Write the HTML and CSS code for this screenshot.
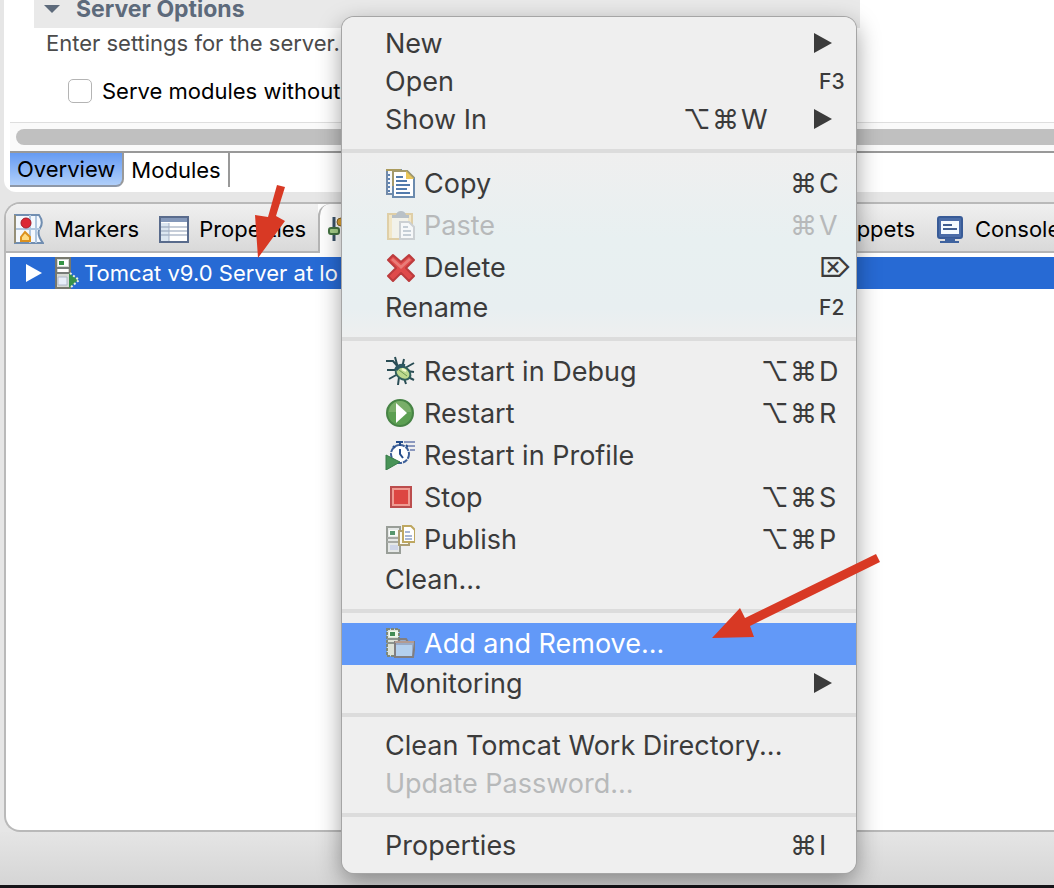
FILE: index.html
```
<!DOCTYPE html>
<html lang="en">
<head>
    <meta charset="UTF-8">
    <meta name="viewport" content="width=device-width, initial-scale=1.0">
    <title>Servers</title>
    <link rel="stylesheet" href="styles.css">
</head>
<body>
    <!-- Server editor -->
    <section class="editor">
        <div class="form">
            <h2 class="section-title">
                <svg class="twisty" viewBox="0 0 16 8"><path d="M0 0h16l-8 8z" fill="#5d6a7b"/></svg>
                Server Options
            </h2>
            <p class="hint">Enter settings for the server.</p>
            <div class="option">
                <input type="checkbox" id="serveModules">
                <label for="serveModules">Serve modules without</label>
            </div>
        </div>
        <div class="scrollbar"><div class="thumb"></div></div>
        <div class="pages">
            <button class="page active">Overview</button>
            <button class="page">Modules</button>
        </div>
    </section>

    <!-- Views -->
    <section class="views">
        <div class="tabs">
            <div class="tab-group">
                <button class="tab">
                    <svg class="tab-icon" viewBox="0 0 30 30">
                        <path d="M1 1h24q5 7 1 13t3 15H1z" fill="#f4f8fd" stroke="#718eb1" stroke-width="2"/>
                        <path d="M2 15h24M16 1v28M22 2v27" stroke="#b0c6df" stroke-width="2"/>
                        <path d="M1 1v28" stroke="#958f78" stroke-width="2"/>
                        <circle cx="12" cy="9" r="5" fill="#dc2733" stroke="#a51b29"/>
                        <path d="M7 27v-4l4-5 5 5v4z" fill="#ffdc83" stroke="#dc911f" stroke-width="2"/>
                    </svg>
                    Markers
                </button>
                <button class="tab">
                    <svg class="tab-icon" viewBox="0 0 30 30">
                        <path d="M1 3h28v25H1z" fill="#fff" stroke="#596b8c" stroke-width="2"/>
                        <path d="M2 4h26v4H2z" fill="#8397b9"/>
                        <path d="M2 9h8v18H2z" fill="#dbe6f1"/>
                        <path d="M2 13h26M2 17h26M2 21h26" stroke="#8d9cb3"/>
                        <path d="M10 9v18" stroke="#a3b1c6" stroke-width="1"/>
                    </svg>
                    Properties
                </button>
            </div>
            <button class="tab current" aria-label="Servers">
                <svg class="tab-icon" viewBox="0 0 30 30">
                    <path d="M6 3v24M15 1v25" stroke="#3b5269" stroke-width="3"/>
                    <rect x="1" y="14" width="10" height="6" rx="2" fill="#a8d18b" stroke="#447342" stroke-width="2"/>
                    <circle cx="13" cy="8" r="4" fill="#e3a531" stroke="#8b6824"/>
                </svg>
            </button>
            <div class="tab-group rest">
                <button class="tab">Snippets</button>
                <button class="tab">
                    <svg class="tab-icon" viewBox="0 0 30 30">
                        <rect x="3" y="3" width="24" height="21" rx="2" fill="#4b6da8" stroke="#385b97" stroke-width="2"/>
                        <path d="M6 7h18v13H6z" fill="#f4fbff"/>
                        <path d="M8 11h9M8 15h14" stroke="#405f91" stroke-width="2"/>
                        <path d="M10 24h10v3h4v2H5v-2h5z" fill="#3f639f"/>
                    </svg>
                    Console
                </button>
            </div>
        </div>
        <div class="server">
            <svg class="expand" viewBox="0 0 16 18"><path d="M0 0l16 9-16 9z" fill="#fff"/></svg>
            <svg class="server-icon" viewBox="0 0 26 32">
                <path d="M2 1h14v30H2z" fill="#d5d9d4" stroke="#77796f" stroke-width="2"/>
                <path d="M4 3h10v6H4z" fill="#fff"/>
                <path d="M5 4h5v4H5z" fill="#359446"/>
                <path d="M3 11h12M3 16h12" stroke="#777d79" stroke-width="2"/>
                <path d="M4 12h10v3H4z" fill="#fff"/>
                <path d="M4 20h9v8H4z" fill="#e7eef8" stroke="#aeb8ca"/>
                <path d="M15 16l9 7-9 8z" fill="#37924b"/>
                <path d="M16 16l9 7-9 8" fill="none" stroke="#e7f1df" stroke-width="2" stroke-dasharray="2 2"/>
            </svg>
            <span>Tomcat v9.0 Server at lo</span>
        </div>
    </section>
    <footer class="status"></footer>

    <!-- Context menu -->
    <div class="menu" role="menu">
        <button class="item">New <span class="submenu"></span></button>
        <button class="item">Open <span class="keys"><kbd class="small">F3</kbd></span></button>
        <button class="item">Show In <span class="keys"><span>⌥</span><span>⌘</span><kbd>W</kbd></span><span class="submenu"></span></button>
        <hr>
        <button class="item with-icon">
            <svg viewBox="0 0 30 30">
                <path d="M2 2h14v24H2z" fill="#f5f8fb" stroke="#728baa" stroke-width="2"/>
                <path d="M1 2h15" stroke="#ab9b5d" stroke-width="2"/>
                <path d="M4 6v18" stroke="#5c82b3" stroke-width="2" stroke-dasharray="2 2"/>
                <path d="M8 3h14l7 7v19H8z" fill="#fff" stroke="#6b8bae" stroke-width="2"/>
                <path d="M8 18V3h14l7 7" fill="none" stroke="#a49a6b" stroke-width="2"/>
                <path d="M21 3v8h8z" fill="#eac75b"/>
                <path d="M11 9h7M11 13h11M11 17h14M11 21h11M11 25h14" stroke="#527bad" stroke-width="2"/>
            </svg>
            Copy <span class="keys"><span>⌘</span><kbd>C</kbd></span>
        </button>
        <button class="item with-icon" disabled>
            <svg viewBox="0 0 30 30">
                <path d="M3 4h24v25H3z" fill="#f5e5bd" stroke="#ddc795" stroke-width="2"/>
                <path d="M7 7h16v21H7z" fill="#f5f3e9"/>
                <path d="M7 8V5h4q1-4 5-4t5 4h3v3z" fill="#aeb6bd"/>
                <path d="M15 12h9l5 5v12H15z" fill="#fafbfc" stroke="#c5c9cc" stroke-width="2"/>
                <path d="M18 17h5M18 21h8M18 25h8" stroke="#bdc6d0" stroke-width="2"/>
            </svg>
            Paste <span class="keys"><span>⌘</span><kbd>V</kbd></span>
        </button>
        <button class="item with-icon">
            <svg viewBox="0 0 30 30">
                <path d="M8 3l8 7 8-7 5 5-8 8 8 8-5 5-8-8-8 8-5-5 8-8-8-8z" fill="#df4b4b" stroke="#bc3c3e" stroke-width="2" stroke-linejoin="round"/>
                <path d="M7 7l9 8 9-8" fill="none" stroke="#e97c78" stroke-width="3"/>
            </svg>
            Delete <span class="keys"><kbd>⌦</kbd></span>
        </button>
        <button class="item">Rename <span class="keys"><kbd class="small">F2</kbd></span></button>
        <hr>
        <button class="item with-icon">
            <svg viewBox="0 0 30 30">
                <path d="M1 5h7l6 7M10 1l3 11M19 3l-2 9M29 7l-9 5M2 14h10M4 23l9-5M13 29l1-8M21 28l-2-6M29 16l-7-1M29 24l-6-3" fill="none" stroke="#294c54" stroke-width="2"/>
                <ellipse cx="18" cy="17" rx="8" ry="6" transform="rotate(35 18 17)" fill="#bcd88d" stroke="#315f5c" stroke-width="2"/>
                <path d="M11 14q2-5 9-4" fill="none" stroke="#2d5862" stroke-width="4"/>
                <path d="M14 14l8 6" stroke="#6e9654" stroke-width="1"/>
                <path d="M17 13l4 2" stroke="#f2f8cf" stroke-width="2"/>
            </svg>
            Restart in Debug <span class="keys"><span>⌥</span><span>⌘</span><kbd>D</kbd></span>
        </button>
        <button class="item with-icon">
            <svg viewBox="0 0 30 30">
                <circle cx="15" cy="15" r="13" fill="#5c9f52" stroke="#478345" stroke-width="2"/>
                <path d="M4 14a11 11 0 0 1 22 0z" fill="#79ae69"/>
                <path d="M11 5l11 10-11 10z" fill="#fff"/>
            </svg>
            Restart <span class="keys"><span>⌥</span><span>⌘</span><kbd>R</kbd></span>
        </button>
        <button class="item with-icon">
            <svg viewBox="0 0 30 30">
                <circle cx="15" cy="14" r="9" fill="#fff" stroke="#3d5f98" stroke-width="2" stroke-dasharray="5 1"/>
                <path d="M11 2h7M15 2v4M21 5l2 2M8 6l2 2M15 9v5l3 4" fill="none" stroke="#254d8b" stroke-width="2"/>
                <path d="M19 2h11M23 6h7M25 10h5" stroke="#8b98be" stroke-width="2"/>
                <path d="M1 15l14 7-14 8z" fill="#489356" stroke="#367a48"/>
            </svg>
            Restart in Profile
        </button>
        <button class="item with-icon">
            <svg viewBox="0 0 30 30">
                <rect x="6" y="5" width="20" height="20" fill="#df3d3b" stroke="#bb4d4d" stroke-width="2"/>
                <rect x="8" y="7" width="16" height="16" fill="#dd4642" stroke="#ef9b92" stroke-width="2"/>
            </svg>
            Stop <span class="keys"><span>⌥</span><span>⌘</span><kbd>S</kbd></span>
        </button>
        <button class="item with-icon">
            <svg viewBox="0 0 30 30">
                <path d="M2 3h13v26H2z" fill="#e5e8e7" stroke="#999e98" stroke-width="2"/>
                <path d="M4 6h9v6H4z" fill="#f9fcf8"/>
                <path d="M5 7h5v4H5z" fill="#57966e"/>
                <path d="M2 14h13M2 18h13" stroke="#a7aaa6" stroke-width="2"/>
                <path d="M5 21h8v5H5z" fill="#ced5e8"/>
                <path d="M14 7h10v14H14z" fill="#fafaf5" stroke="#ad9f74" stroke-width="2"/>
                <path d="M18 2h8l4 4v12H18z" fill="#fff" stroke="#bea760" stroke-width="2"/>
                <path d="M20 8h5M20 12h7M20 15h7" stroke="#a8b7d5" stroke-width="2"/>
            </svg>
            Publish <span class="keys"><span>⌥</span><span>⌘</span><kbd>P</kbd></span>
        </button>
        <button class="item">Clean...</button>
        <hr>
        <button class="item with-icon selected">
            <svg viewBox="0 0 30 30">
                <path d="M2 1h12v27H2z" fill="#dde2d7" stroke="#7d8779" stroke-width="2" stroke-dasharray="3 1"/>
                <path d="M4 3h9v6H4z" fill="#eff8e9"/>
                <path d="M5 4h5v4H5z" fill="#438c55"/>
                <path d="M2 11h11M2 15h9" stroke="#8d958e" stroke-width="2"/>
                <path d="M10 29V14h3l2-3h6l2 3h7l-2 15z" fill="#9aabc6" stroke="#817e80" stroke-width="2"/>
                <path d="M11 17h16v11H11z" fill="#b4d0ee"/>
                <path d="M10 14h19" stroke="#b29b92" stroke-width="2"/>
            </svg>
            Add and Remove...
        </button>
        <button class="item">Monitoring <span class="submenu"></span></button>
        <hr>
        <button class="item">Clean Tomcat Work Directory...</button>
        <button class="item" disabled>Update Password...</button>
        <hr>
        <button class="item">Properties <span class="keys"><span>⌘</span><kbd>I</kbd></span></button>
    </div>

    <!-- Red arrows -->
    <svg class="arrow arrow-server" viewBox="0 0 32 74"><path d="M23 0l8 2-9 29 9 5-27 37L1 30l13 2z" fill="#d83924"/></svg>
    <svg class="arrow arrow-add" viewBox="0 0 168 86"><path d="M164 0l4 8L38 72l4 11L0 84l28-30 5 10z" fill="#d83924"/></svg>
</body>
</html>
```
FILE: styles.css
```
* {
    box-sizing: border-box;
}
body {
    font-family: Inter, "Liberation Sans", sans-serif;
    font-size: 22px;
    margin: 0;
    height: 100vh;
    position: relative;
    display: flex;
    flex-direction: column;
    overflow: hidden;
    background: #e6e6e6;
    color: #000;
}
button {
    font: inherit;
    color: inherit;
    background: none;
    border: 0;
    border-radius: 0;
    padding: 0;
    text-align: left;
    white-space: nowrap;
}
.editor {
    margin-left: 4px;
    padding-left: 6px;
    background: #fff;
    border-radius: 0 0 0 12px;
    height: 192px;
    flex: none;
}
.form {
    height: 122px;
    padding-left: 24px;
}
.section-title {
    display: flex;
    align-items: center;
    gap: 16px;
    width: 81%;
    height: 28px;
    margin: 0;
    padding: 0 0 10px 10px;
    background: #e9e9e9;
    color: #5d6a7b;
    font-size: 23px;
    line-height: 18px;
}
.twisty {
    width: 16px;
    height: 8px;
}
.hint {
    margin: 0;
    padding-left: 12px;
    line-height: 30px;
    color: #4b4b4b;
}
.option {
    display: flex;
    align-items: center;
    gap: 10px;
    height: 66px;
    padding-left: 34px;
    white-space: nowrap;
}
.option input {
    appearance: none;
    width: 24px;
    height: 24px;
    margin: 0;
    background: #fff;
    border: 1px solid #b4b4b4;
    border-radius: 5px;
}
.scrollbar {
    height: 29px;
    padding: 6px 0 6px 6px;
    background: #fafafa;
    border-top: 1px solid #dedede;
}
.thumb {
    height: 16px;
    border-radius: 8px 0 0 8px;
    background: #c0c0c0;
}
.pages {
    display: flex;
    border-top: 2px solid #999;
}
.page {
    height: 34px;
    padding: 0 7px;
    border-right: 2px solid #999;
}
.page.active {
    background: linear-gradient(#669bf3, #b0cffa);
    border-bottom: 2px solid #8e98a8;
    border-radius: 0 0 8px 0;
}
.views {
    flex: 1;
    margin: 10px 0 0 4px;
    background: #fff;
    border: 2px solid #b9b9b9;
    border-right: 0;
    border-radius: 16px 0 0 16px;
    overflow: hidden;
}
.tabs {
    display: flex;
    height: 49px;
}
.tab-group {
    display: flex;
    gap: 20px;
    padding: 2px 12px 0 8px;
    background: linear-gradient(#f0f0f0, #d9d9d9);
    border-bottom: 2px solid #b5b5b5;
}
.tab-group.rest {
    flex: 1;
    padding-left: 20px;
}
.tab {
    display: flex;
    align-items: center;
    gap: 10px;
}
.tab-icon {
    width: 30px;
    height: 30px;
    flex: none;
}
.current {
    width: 486px;
    flex: none;
    padding-left: 8px;
    background: #fff;
    border-left: 2px solid #b5b5b5;
    border-radius: 12px 0 0 0;
}
.server {
    display: flex;
    align-items: center;
    height: 32px;
    margin: 4px 0 0 4px;
    padding-left: 16px;
    background: #276ad4;
    color: #fff;
    white-space: nowrap;
}
.expand {
    width: 16px;
    height: 18px;
    margin-right: 12px;
}
.server-icon {
    width: 26px;
    height: 32px;
    margin-right: 4px;
}
.status {
    flex: none;
    height: 56px;
    background: linear-gradient(#e5e5e5, #d5d5d5);
    border-bottom: 3px solid #161418;
}
.menu {
    position: absolute;
    left: 342px;
    top: 17px;
    width: 514px;
    padding: 8px 0;
    background: linear-gradient(#efefef 16%, #e8f0f1 26%, #e8eff1 34%, #efefef 38%);
    border-radius: 12px;
    box-shadow: 0 0 0 1px #a5a5a5, 0 8px 24px rgba(0, 0, 0, 0.4);
    color: #3b3b3b;
    font-size: 27px;
}
.menu hr {
    height: 4px;
    margin: 10px 0;
    border: 0;
    background: #dcdcdc;
}
.item {
    display: flex;
    align-items: center;
    width: 100%;
    height: 38px;
    padding: 0 7px 2px 43px;
}
.item.with-icon {
    height: 42px;
}
.item svg {
    width: 30px;
    height: 30px;
    margin-right: 9px;
}
.item:disabled {
    color: #b7b9ba;
}
.item:disabled svg {
    opacity: 0.8;
}
.item.selected {
    background: #6299f8;
    color: #fff;
}
.keys {
    display: flex;
    align-items: center;
    margin-left: auto;
}
.keys span {
    width: 29px;
}
.keys kbd {
    width: 30px;
    font-family: inherit;
}
.keys .small {
    font-size: 21px;
    font-weight: 500;
}
.submenu {
    width: 18px;
    height: 20px;
    margin: 0 17px 0 auto;
    background: #3b3b3b;
    clip-path: polygon(0 0, 100% 50%, 0 100%);
}
.keys + .submenu {
    margin-left: 43px;
}
.arrow {
    position: absolute;
}
.arrow-server {
    left: 254px;
    top: 185px;
    width: 32px;
}
.arrow-add {
    left: 712px;
    top: 554px;
    width: 168px;
}
```
